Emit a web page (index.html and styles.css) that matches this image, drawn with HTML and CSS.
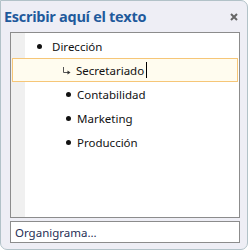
FILE: index.html
```html
<!DOCTYPE html>
<html lang="es">
<head>
  <meta charset="UTF-8" />
  <title>Panel de texto</title>
  <link rel="stylesheet" href="styles.css">
</head>
<body>
  <div class="ventana">
    <div class="titulo">
      <span class="titulo-texto">Escribir aquí el texto</span>
      <svg class="cerrar" width="8" height="8" viewBox="0 0 8 8">
        <path d="M1 1 L7 7 M7 1 L1 7" stroke="#666" stroke-width="2"/>
      </svg>
    </div>
    <div class="panel">
      <div class="fila nivel1"><span class="vineta"></span>Dirección</div>
      <div class="fila nivel2 activa">
        <svg class="flecha" width="9" height="8" viewBox="0 0 9 8">
          <path d="M1.5 0 V5.5 H6" fill="none" stroke="#555" stroke-width="1"/>
          <path d="M5.5 3.5 L8.5 5.5 L5.5 7.5 Z" fill="#333"/>
        </svg>Secretariado<span class="cursor"></span>
      </div>
      <div class="fila nivel2"><span class="vineta"></span>Contabilidad</div>
      <div class="fila nivel2"><span class="vineta"></span>Marketing</div>
      <div class="fila nivel2"><span class="vineta"></span>Producción</div>
    </div>
    <div class="pie">Organigrama...</div>
  </div>
</body>
</html>
```

FILE: styles.css
```css
body { margin: 0; padding: 0; background: #ffffff; font-family: "Noto Sans", "Liberation Sans", sans-serif; }
.ventana {
  width: 246px; height: 248px; background: #eeeef5;
  border: 1px solid #b2c2c8; border-radius: 0 7px 7px 7px;
  display: flex; flex-direction: column;
}
.titulo {
  height: 31px; display: flex; align-items: center; justify-content: space-between;
  padding: 0 9px 0 3px; box-sizing: border-box;
}
.titulo-texto { color: #1f5a9c; font-weight: bold; font-size: 14.5px; font-family: "Open Sans", "Noto Sans", sans-serif; letter-spacing: -0.3px; margin-top: -1px; }
.cerrar { margin-top: 1px; }
.panel {
  margin: 0 7px 0 9px; height: 186px; box-sizing: border-box;
  border: 1px solid #8c8c8c; padding-top: 1px;
  background: linear-gradient(to right, #f0f0f0 14px, #ffffff 14px);
}
.fila {
  height: 24px; margin: 0 1px; box-sizing: border-box;
  display: flex; align-items: center; font-size: 11.5px; color: #111;
}
.nivel1 { padding-left: 25px; }
.nivel2 { padding-left: 54px; }
.vineta { width: 5px; height: 5px; border-radius: 50%; background: #111; margin-right: 6px; }
.nivel1 .vineta { margin-right: 10px; }
.fila.activa { border: 1px solid #f6c677; background: #fffcef; padding-left: 49px; }
.flecha { margin-right: 5px; margin-top: 1px; }
.cursor { display: inline-block; width: 1px; height: 16px; background: #000; margin-left: 2px; }
.pie {
  margin: 3px 7px 0 9px; height: 22px; box-sizing: border-box;
  border: 1px solid #8c8c8c; background: #ffffff;
  font-size: 11.5px; color: #1f2f55; padding-left: 4px;
  display: flex; align-items: center;
}
```
